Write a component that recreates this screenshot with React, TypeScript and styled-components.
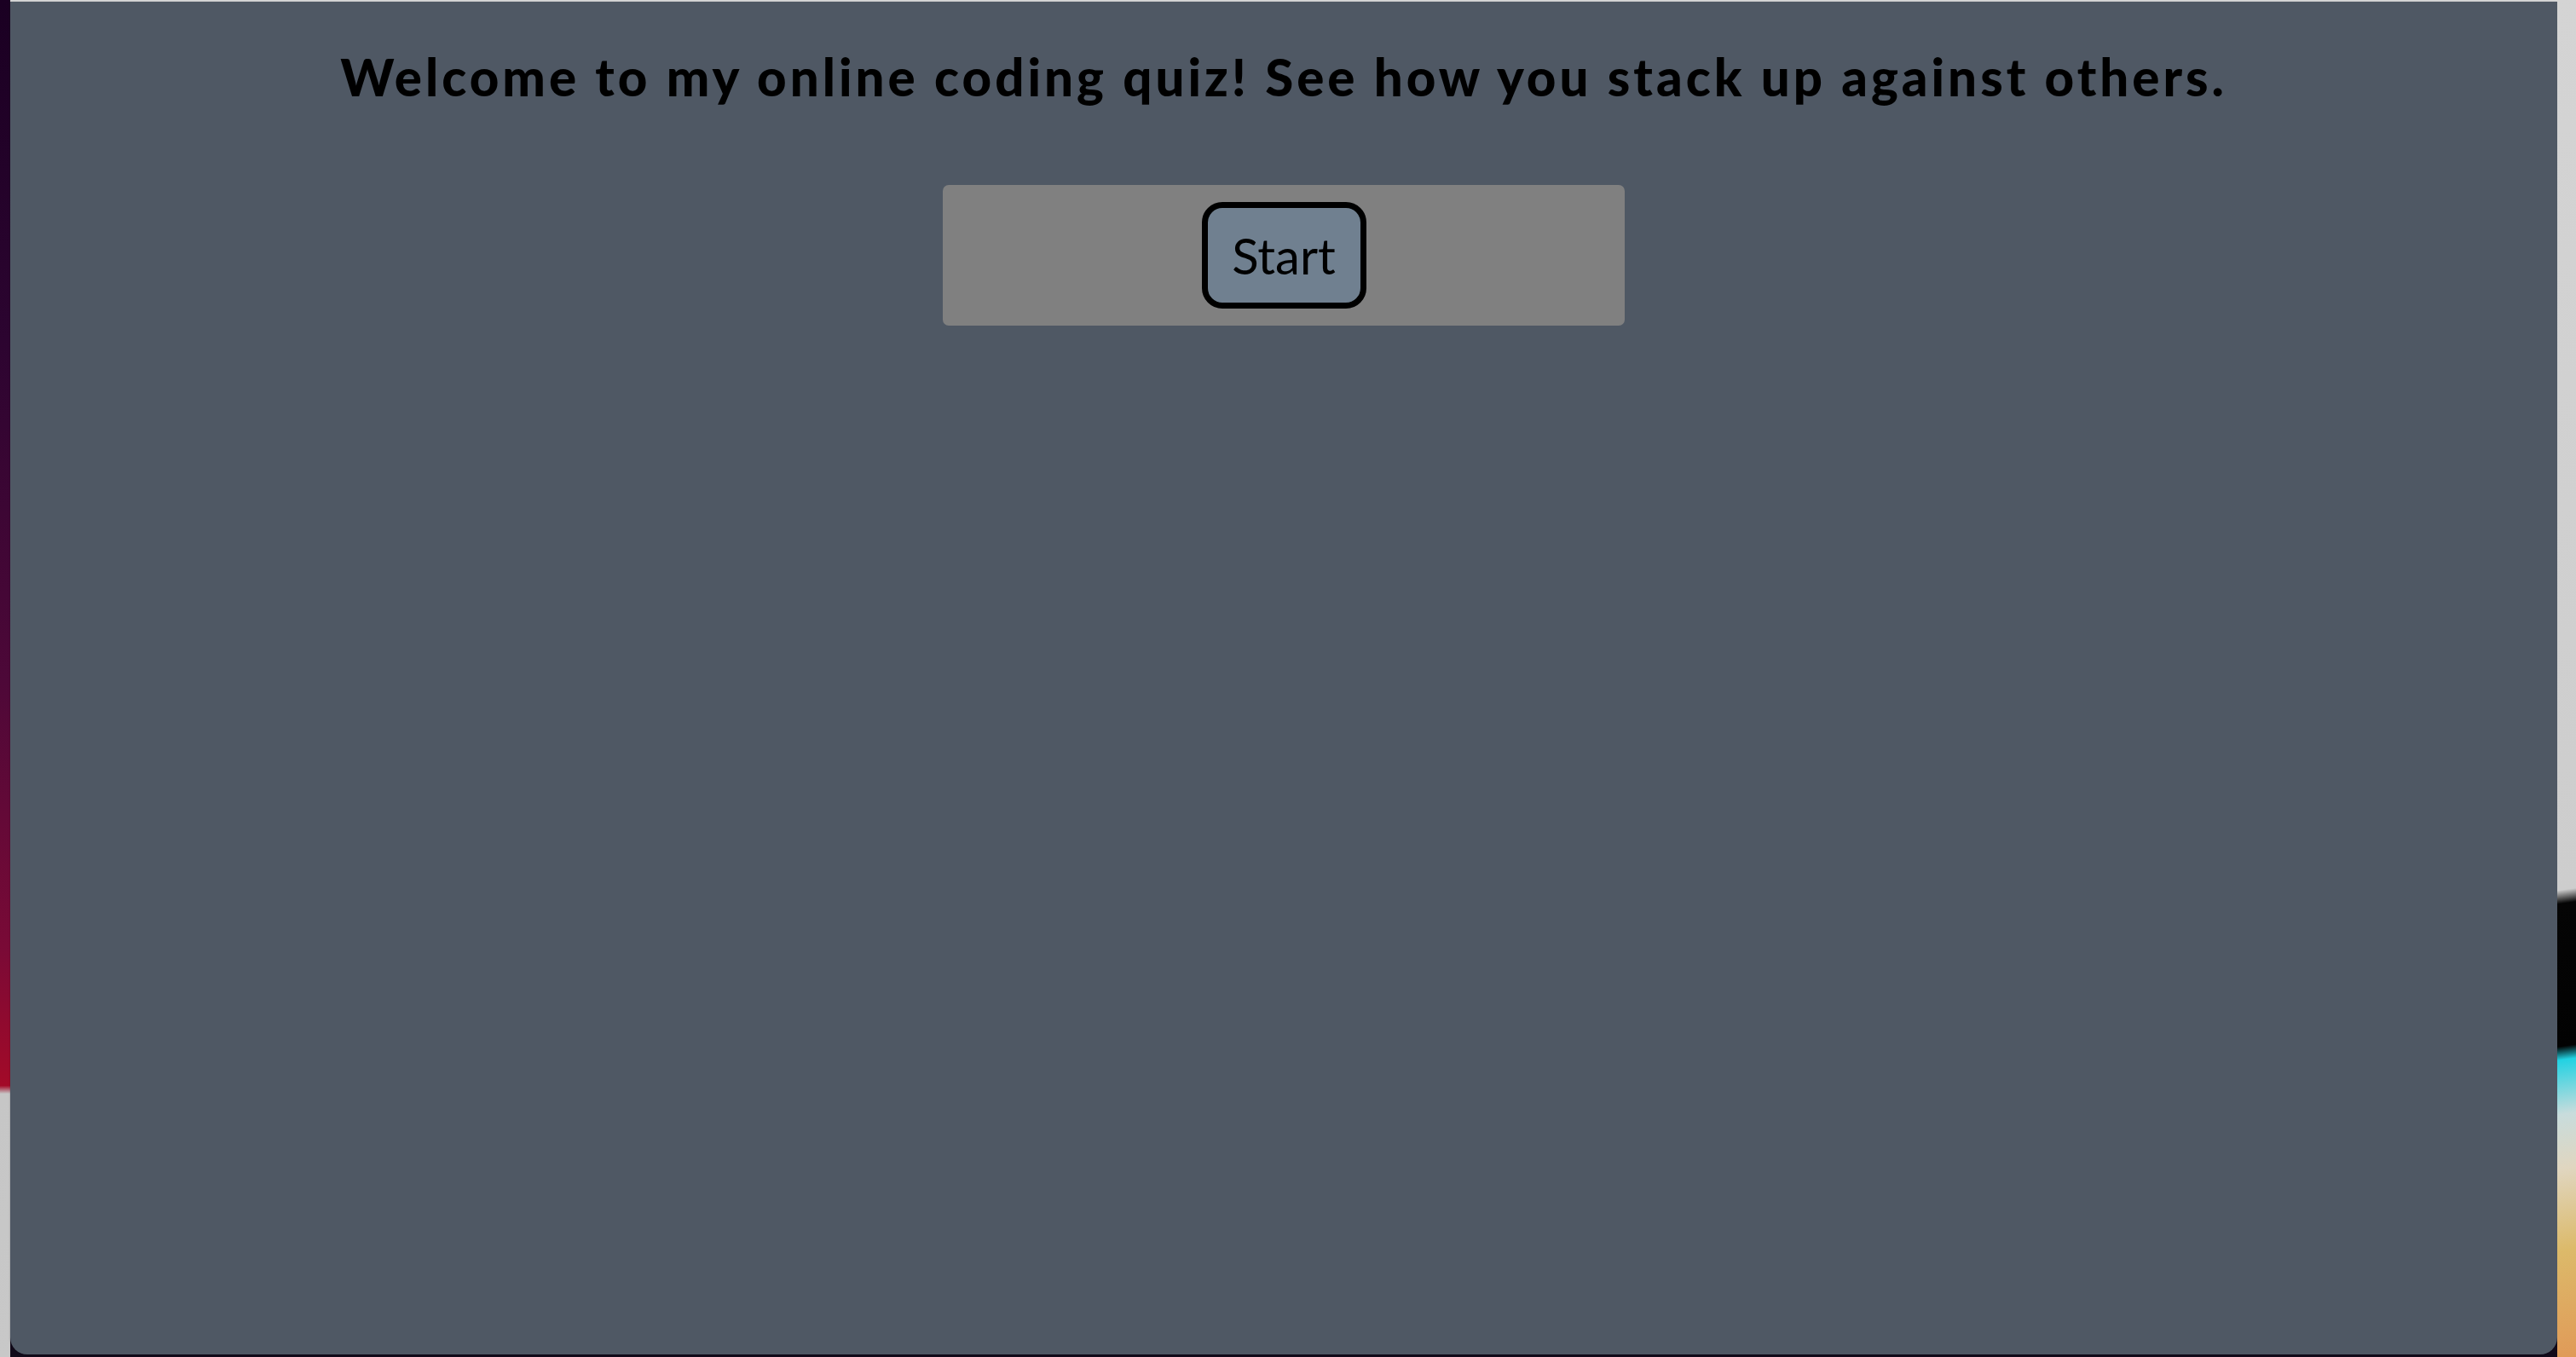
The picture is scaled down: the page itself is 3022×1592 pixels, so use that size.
import * as React from 'react';
import styled, { createGlobalStyle } from 'styled-components';

const GlobalStyle = createGlobalStyle`
  html, body {
    margin: 0;
    padding: 0;
    overflow: hidden;
  }
  body {
    font-family: 'Lato', 'Liberation Sans', sans-serif;
  }
`;

const Desktop = styled.div`
  display: grid;
  grid-template-columns: 12px 1fr 22px;
  width: 3022px;
  height: 1592px;
`;

const LeftEdge = styled.div`
  background: linear-gradient(
    to bottom,
    #1a0022 0%,
    #2c0430 25%,
    #4d0838 50%,
    #7a0a36 70%,
    #a30a28 80%,
    #c6c6c6 80.6%,
    #c8c8c8 100%
  );
`;

const RightEdge = styled.div`
  background: linear-gradient(
    172deg,
    #d4d4d4 0%,
    #cdcdcd 65.5%,
    #050505 66.5%,
    #020202 77%,
    #22d2e2 78%,
    #c8dcdc 82%,
    #e0d6c0 86%,
    #dcba6a 92%,
    #e09a58 100%
  );
`;

const Column = styled.div`
  display: flex;
  flex-direction: column;
  background: linear-gradient(to bottom, #dcdcdc 0, #dcdcdc 2px, #120a1a 2px);
  padding-top: 2px;
  padding-bottom: 3px;
`;

const Window = styled.main`
  flex: 1;
  display: flex;
  flex-direction: column;
  align-items: center;
  background: #4f5864;
  border-radius: 0 0 20px 20px;
  box-shadow: 0 0 2px rgba(0, 0, 0, 0.35);
  padding-top: 53px;
`;

const Title = styled.h1`
  margin: 0;
  font-size: 60px;
  line-height: 70px;
  font-weight: 900;
  letter-spacing: 4px;
  color: #000;
  text-align: center;
`;

const StartPanel = styled.section`
  display: flex;
  justify-content: center;
  width: 800px;
  box-sizing: border-box;
  margin-top: 92px;
  padding: 20px 0;
  background: #808080;
  border-radius: 7px;
`;

const StartButton = styled.button`
  display: flex;
  align-items: center;
  justify-content: center;
  width: 193px;
  height: 125px;
  box-sizing: border-box;
  border: 7px solid #000;
  border-radius: 24px;
  background: #708090;
  color: #000;
  font-family: 'Lato', 'Liberation Sans', sans-serif;
  font-size: 58px;
  line-height: 1;
  padding: 0;
  cursor: pointer;
`;

const App = () => (
  <>
    <GlobalStyle />
    <Desktop>
      <LeftEdge />
      <Column>
        <Window>
          <Title>Welcome to my online coding quiz! See how you stack up against others.</Title>
          <StartPanel>
            <StartButton type="button">Start</StartButton>
          </StartPanel>
        </Window>
      </Column>
      <RightEdge />
    </Desktop>
  </>
);

export default App;
